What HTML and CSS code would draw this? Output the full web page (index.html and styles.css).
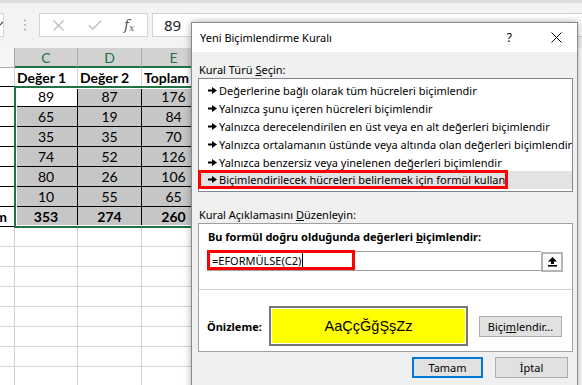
FILE: index.html
```html
<!DOCTYPE html>
<html lang="tr">
<head>
	<meta charset="UTF-8">
	<title>Yeni Biçimlendirme Kuralı</title>
	<link rel="stylesheet" href="styles.css">
</head>
<body>
	<div class="excel">
		<div class="formula-bar">
			<div class="namebox-end">
				<svg width="4" height="22" viewBox="0 0 4 22"><path d="M-3 8l3 3 3-3" fill="none" stroke="#444" stroke-width="1.2"/></svg>
			</div>
			<svg class="grip" width="4" height="12" viewBox="0 0 4 12"><circle cx="2" cy="1.5" r="1" fill="#b0b0b0"/><circle cx="2" cy="6" r="1" fill="#b0b0b0"/><circle cx="2" cy="10.5" r="1" fill="#b0b0b0"/></svg>
			<div class="fx-buttons">
				<svg class="fx-cancel" width="11" height="11" viewBox="0 0 11 11"><path d="M0.5 0.5L10.5 10.5M10.5 0.5L0.5 10.5" stroke="#bdbdbd" stroke-width="1.3"/></svg>
				<svg class="fx-enter" width="14" height="10" viewBox="0 0 14 10"><path d="M0.8 5.2L4.8 9L13.2 0.8" fill="none" stroke="#bdbdbd" stroke-width="1.4"/></svg>
				<span class="fx-label">f<sub>x</sub></span>
			</div>
			<div class="fx-value">89</div>
		</div>

		<div class="sheet">
			<div class="cell hd"></div>
			<div class="cell hd sel">C</div>
			<div class="cell hd sel">D</div>
			<div class="cell hd sel">E</div>
			<div class="cell hd">F</div>
			<div class="cell hd">G</div>
			<div class="cell hd">H</div>

			<div class="cell bb"></div>
			<div class="cell bb strong">Değer 1</div>
			<div class="cell bb strong">Değer 2</div>
			<div class="cell bb strong">Toplam</div>
			<div class="cell"></div>
			<div class="cell"></div>
			<div class="cell"></div>

			<div class="cell bb"></div>
			<div class="cell b num">89</div>
			<div class="cell b s num">87</div>
			<div class="cell b s num">176</div>
			<div class="cell"></div>
			<div class="cell"></div>
			<div class="cell"></div>

			<div class="cell bb"></div>
			<div class="cell b s num">65</div>
			<div class="cell b s num">19</div>
			<div class="cell b s num">84</div>
			<div class="cell"></div>
			<div class="cell"></div>
			<div class="cell"></div>

			<div class="cell bb"></div>
			<div class="cell b s num">35</div>
			<div class="cell b s num">35</div>
			<div class="cell b s num">70</div>
			<div class="cell"></div>
			<div class="cell"></div>
			<div class="cell"></div>

			<div class="cell bb"></div>
			<div class="cell b s num">74</div>
			<div class="cell b s num">52</div>
			<div class="cell b s num">126</div>
			<div class="cell"></div>
			<div class="cell"></div>
			<div class="cell"></div>

			<div class="cell bb"></div>
			<div class="cell b s num">80</div>
			<div class="cell b s num">26</div>
			<div class="cell b s num">106</div>
			<div class="cell"></div>
			<div class="cell"></div>
			<div class="cell"></div>

			<div class="cell bb"></div>
			<div class="cell b s num">10</div>
			<div class="cell b s num">55</div>
			<div class="cell b s num">65</div>
			<div class="cell"></div>
			<div class="cell"></div>
			<div class="cell"></div>

			<div class="cell bb strong clipped"><span>Toplam</span></div>
			<div class="cell b s num strong">353</div>
			<div class="cell b s num strong">274</div>
			<div class="cell b s num strong">260</div>
			<div class="cell"></div>
			<div class="cell"></div>
			<div class="cell"></div>

			<div class="cell"></div><div class="cell"></div><div class="cell"></div><div class="cell"></div><div class="cell"></div><div class="cell"></div><div class="cell"></div>
			<div class="cell"></div><div class="cell"></div><div class="cell"></div><div class="cell"></div><div class="cell"></div><div class="cell"></div><div class="cell"></div>
			<div class="cell"></div><div class="cell"></div><div class="cell"></div><div class="cell"></div><div class="cell"></div><div class="cell"></div><div class="cell"></div>
			<div class="cell"></div><div class="cell"></div><div class="cell"></div><div class="cell"></div><div class="cell"></div><div class="cell"></div><div class="cell"></div>
			<div class="cell"></div><div class="cell"></div><div class="cell"></div><div class="cell"></div><div class="cell"></div><div class="cell"></div><div class="cell"></div>
			<div class="cell"></div><div class="cell"></div><div class="cell"></div><div class="cell"></div><div class="cell"></div><div class="cell"></div><div class="cell"></div>
			<div class="cell"></div><div class="cell"></div><div class="cell"></div><div class="cell"></div><div class="cell"></div><div class="cell"></div><div class="cell"></div>
			<div class="cell"></div><div class="cell"></div><div class="cell"></div><div class="cell"></div><div class="cell"></div><div class="cell"></div><div class="cell"></div>

			<!-- seçili aralık C2:E8 -->
			<div class="selection"></div>
		</div>
	</div>

	<div class="dialog">
		<div class="titlebar">
			<span class="title">Yeni Biçimlendirme Kuralı</span>
			<span class="help">?</span>
			<svg class="close" width="11" height="11" viewBox="0 0 11 11"><path d="M0.5 0.5L10.5 10.5M10.5 0.5L0.5 10.5" stroke="#000" stroke-width="1"/></svg>
		</div>

		<div class="dlg-body">
			<div class="label">Kural Türü <u>S</u>eçin:</div>
			<div class="rule-list">
				<div class="rule"><svg class="arrow" width="9" height="7" viewBox="0 0 9 7"><path d="M0 2.5h4v2H0z M4 0l5 3.5-5 3.5z"/></svg>Değerlerine bağlı olarak tüm hücreleri biçimlendir</div>
				<div class="rule"><svg class="arrow" width="9" height="7" viewBox="0 0 9 7"><path d="M0 2.5h4v2H0z M4 0l5 3.5-5 3.5z"/></svg>Yalnızca şunu içeren hücreleri biçimlendir</div>
				<div class="rule"><svg class="arrow" width="9" height="7" viewBox="0 0 9 7"><path d="M0 2.5h4v2H0z M4 0l5 3.5-5 3.5z"/></svg>Yalnızca derecelendirilen en üst veya en alt değerleri biçimlendir</div>
				<div class="rule"><svg class="arrow" width="9" height="7" viewBox="0 0 9 7"><path d="M0 2.5h4v2H0z M4 0l5 3.5-5 3.5z"/></svg>Yalnızca ortalamanın üstünde veya altında olan değerleri biçimlendir</div>
				<div class="rule"><svg class="arrow" width="9" height="7" viewBox="0 0 9 7"><path d="M0 2.5h4v2H0z M4 0l5 3.5-5 3.5z"/></svg>Yalnızca benzersiz veya yinelenen değerleri biçimlendir</div>
				<div class="rule selected">
					<span class="mark rule-mark"><svg class="arrow" width="9" height="7" viewBox="0 0 9 7"><path d="M0 2.5h4v2H0z M4 0l5 3.5-5 3.5z"/></svg>Biçimlendirilecek hücreleri belirlemek için formül kullan</span>
				</div>
			</div>

			<div class="label second">Kural Açıklamasını <u>D</u>üzenleyin:</div>
			<div class="panel">
				<div class="panel-title">Bu formül doğru olduğunda değerleri <u>b</u>içimlendir:</div>
				<div class="formula-row">
					<div class="formula-input">
						<span class="mark formula-mark">=EFORMÜLSE(C2)<i class="caret"></i></span>
					</div>
					<div class="ref-btn">
						<svg width="9" height="10" viewBox="0 0 9 10"><path d="M4.5 0L9 4.5H6V7H3V4.5H0z"/><rect y="8" width="9" height="1.6"/></svg>
					</div>
				</div>
				<div class="preview-row">
					<span class="preview-label">Önizleme:</span>
					<div class="preview"><div class="sample">AaÇçĞğŞşZz</div></div>
					<button class="btn format-btn" type="button">Biçi<u>m</u>lendir...</button>
				</div>
			</div>

			<div class="footer">
				<button class="btn default" type="button">Tamam</button>
				<button class="btn" type="button">İptal</button>
			</div>
		</div>
	</div>
</body>
</html>
```

FILE: styles.css
```css
* {
	box-sizing: border-box;
}

body {
	position: relative;
	width: 582px;
	height: 385px;
	margin: 0;
	overflow: hidden;
	background-color: #fff;
	font-family: "Noto Sans", "Open Sans", sans-serif;
	font-size: 11px;
	color: #000;
}

/* Excel arka planı */
.formula-bar {
	display: flex;
	align-items: flex-start;
	height: 48px;
	padding-top: 10px;
	border-top: 3px solid #dcdcdc;
	background-color: #f3f3f3;
}
.namebox-end {
	width: 4px;
	height: 24px;
	border: 1px solid #d4d4d4;
	border-left: none;
	background-color: #fff;
	overflow: hidden;
}
.grip {
	margin: 6px 0 0 19px;
}
.fx-buttons {
	display: flex;
	align-items: center;
	width: 109px;
	height: 24px;
	margin-left: 12px;
	border: 1px solid #d4d4d4;
	background-color: #fff;
}
.fx-cancel {
	margin-left: 13px;
}
.fx-enter {
	margin-left: 24px;
}
.fx-label {
	margin-left: 22px;
	font-family: "DejaVu Serif", "Liberation Serif", serif;
	font-style: italic;
	font-size: 14px;
	color: #555;
	line-height: 1;
}
.fx-label sub {
	font-size: 9px;
	vertical-align: -1px;
}
.fx-value {
	flex: 1;
	height: 24px;
	margin-left: 4px;
	padding-left: 11px;
	border: 1px solid #d4d4d4;
	border-right: none;
	background-color: #fff;
	font-family: "Noto Sans", sans-serif;
	font-size: 15px;
	line-height: 22px;
	color: #222;
}

.sheet {
	position: relative;
	display: grid;
	grid-template-columns: 15px 63px 64px 64px 64px 64px 64px;
	grid-template-rows: 20px 19px repeat(15, 20px);
}
.cell {
	padding: 0 2px;
	border-right: 1px solid #d4d4d4;
	border-bottom: 1px solid #d4d4d4;
	font-family: Lato, "Liberation Sans", sans-serif;
	font-size: 14px;
	line-height: 19px;
	white-space: nowrap;
	overflow: hidden;
}
.hd {
	border-right-color: #ababab;
	border-bottom-color: #ababab;
	background-color: #f6f6f6;
	color: #444;
	text-align: center;
	line-height: 19px;
}
.hd.sel {
	border-bottom: 2px solid #217346;
	background-color: #d2d2d2;
	color: #217346;
}
.bb {
	border-bottom-color: #000;
}
.b {
	border-right-color: #000;
	border-bottom-color: #000;
}
.s {
	background-color: #c6c6c6;
}
.num {
	text-align: center;
}
.strong {
	font-weight: bold;
}
.clipped {
	display: flex;
	justify-content: flex-end;
	padding-right: 7px;
}
.selection {
	position: absolute;
	left: 14px;
	top: 38px;
	width: 200px;
	height: 142px;
	border: 2px solid #217346;
	box-shadow: inset 0 0 0 1px #fff;
}

/* İletişim kutusu */
.dialog {
	position: absolute;
	left: 191px;
	top: 22px;
	width: 387px;
	height: 380px;
	border: 1px solid #8a8a8a;
	background-color: #f0f0f0;
	box-shadow: 0 0 7px rgba(0, 0, 0, .35);
}
.titlebar {
	display: flex;
	align-items: center;
	height: 29px;
	padding-left: 8px;
	background-color: #fff;
}
.title {
	flex: 1;
}
.help {
	font-size: 12px;
}
.close {
	margin: 0 15px 0 39px;
}

.dlg-body {
	padding: 10px 4px 0 6px;
}
.label {
	padding-left: 1px;
	line-height: 16px;
}
.label.second {
	margin-top: 15px;
}

.rule-list {
	padding: 2px 0;
	border: 1px solid #828790;
	background-color: #fff;
}
.rule {
	display: flex;
	align-items: center;
	height: 18px;
	padding-left: 9px;
	white-space: nowrap;
}
.arrow {
	flex: none;
	margin-right: 2px;
}
.rule.selected {
	padding-left: 0;
	background-color: #e3e3e3;
}
.mark {
	border: 3px solid #f00;
}
.rule-mark {
	display: flex;
	align-items: center;
	width: 310px;
	height: 19px;
	margin: -1px 0 0 -1px;
	padding-left: 7px;
}

.panel {
	height: 129px;
	padding: 5px 0 0 8px;
	border: 1px solid #a0a0a0;
	background-color: #fff;
}
.panel-title {
	padding-left: 1px;
	font-weight: bold;
	line-height: 16px;
}
.formula-row {
	display: flex;
	margin-top: 6px;
}
.formula-input {
	display: flex;
	width: 334px;
	height: 20px;
	border: 1px solid #a0a0a0;
	border-right: none;
}
.formula-mark {
	display: flex;
	align-items: center;
	width: 148px;
	height: 20px;
	margin: -2px 0 0 -1px;
	padding-left: 2px;
}
.caret {
	width: 1px;
	height: 14px;
	margin-left: 1px;
	background-color: #000;
}
.ref-btn {
	display: flex;
	align-items: center;
	justify-content: center;
	width: 22px;
	height: 20px;
	margin-top: 1px;
	border: 2px solid #b4b4b4;
	background-color: #fbfbfb;
}

.preview-row {
	display: flex;
	align-items: center;
	margin: 17px 0 0 -8px;
	padding: 16px 0 0 8px;
	border-top: 1px solid #d2d2d2;
}
.preview-label {
	width: 62px;
	font-weight: bold;
}
.preview {
	width: 199px;
	height: 40px;
	padding: 1px;
	border: 2px solid #767676;
	background-color: #fff;
}
.sample {
	height: 100%;
	background-color: #ff0;
	font-family: "Liberation Sans", Arial, sans-serif;
	font-size: 14.5px;
	line-height: 34px;
	text-align: center;
}

.btn {
	height: 21px;
	padding: 0;
	border: 1px solid #adadad;
	background-color: #e1e1e1;
	font-family: "Noto Sans", "Open Sans", sans-serif;
	font-size: 11px;
	color: #000;
}
.format-btn {
	width: 83px;
	margin-left: 11px;
}

.footer {
	display: flex;
	justify-content: flex-end;
	gap: 12px;
	margin-top: 5px;
	padding-right: 5px;
}
.footer .btn {
	width: 73px;
}
.btn.default {
	width: 71px;
	border: 2px solid #0078d7;
}
```
